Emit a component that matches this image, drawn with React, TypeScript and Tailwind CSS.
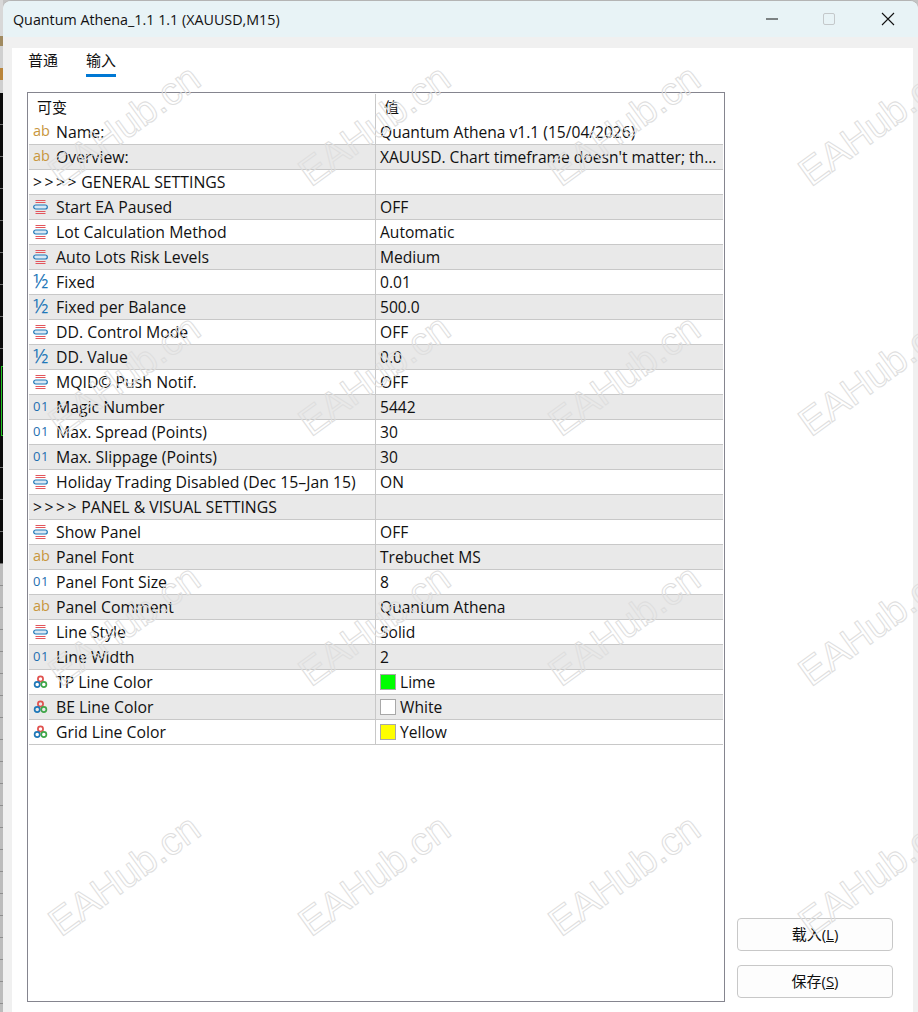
import React from 'react';

const FONT = "font-['Open_Sans','Noto_Sans_CJK_SC',sans-serif]";

type Kind = 'ab' | 'enum' | 'frac' | 'int' | 'color' | 'none';

type Row = { kind: Kind; name: string; value: string; swatch?: string };

const ROWS: Row[] = [
  { kind: 'ab', name: 'Name:', value: 'Quantum Athena v1.1 (15/04/2026)' },
  { kind: 'ab', name: 'Overview:', value: "XAUUSD. Chart timeframe doesn't matter; th..." },
  { kind: 'none', name: 'GENERAL SETTINGS', value: '' },
  { kind: 'enum', name: 'Start EA Paused', value: 'OFF' },
  { kind: 'enum', name: 'Lot Calculation Method', value: 'Automatic' },
  { kind: 'enum', name: 'Auto Lots Risk Levels', value: 'Medium' },
  { kind: 'frac', name: 'Fixed', value: '0.01' },
  { kind: 'frac', name: 'Fixed per Balance', value: '500.0' },
  { kind: 'enum', name: 'DD. Control Mode', value: 'OFF' },
  { kind: 'frac', name: 'DD. Value', value: '0.0' },
  { kind: 'enum', name: 'MQID© Push Notif.', value: 'OFF' },
  { kind: 'int', name: 'Magic Number', value: '5442' },
  { kind: 'int', name: 'Max. Spread (Points)', value: '30' },
  { kind: 'int', name: 'Max. Slippage (Points)', value: '30' },
  { kind: 'enum', name: 'Holiday Trading Disabled (Dec 15–Jan 15)', value: 'ON' },
  { kind: 'none', name: 'PANEL & VISUAL SETTINGS', value: '' },
  { kind: 'enum', name: 'Show Panel', value: 'OFF' },
  { kind: 'ab', name: 'Panel Font', value: 'Trebuchet MS' },
  { kind: 'int', name: 'Panel Font Size', value: '8' },
  { kind: 'ab', name: 'Panel Comment', value: 'Quantum Athena' },
  { kind: 'enum', name: 'Line Style', value: 'Solid' },
  { kind: 'int', name: 'Line Width', value: '2' },
  { kind: 'color', name: 'TP Line Color', value: 'Lime', swatch: 'bg-[#00ff00]' },
  { kind: 'color', name: 'BE Line Color', value: 'White', swatch: 'bg-white' },
  { kind: 'color', name: 'Grid Line Color', value: 'Yellow', swatch: 'bg-[#ffff00]' },
];

const MARKS = [
  [124, 125], [374, 125], [624, 125], [874, 125],
  [124, 375], [374, 375], [624, 375], [874, 375],
  [124, 625], [374, 625], [624, 625], [874, 625],
  [124, 875], [374, 875], [624, 875], [874, 875],
];

function EnumIcon() {
  return (
    <svg width="15" height="16" viewBox="0 0 15 16" fill="none">
      <path d="M2.5 1.5h10M2.5 3.5h10M2.5 12.5h10M2.5 14.5h10" stroke="#e2555c" strokeWidth="1" />
      <rect x="0.7" y="6" width="13.6" height="4" rx="2" fill="#d8e8f5" stroke="#1f78b8" strokeWidth="1.2" />
    </svg>
  );
}

function ColorIcon() {
  return (
    <svg width="15" height="16" viewBox="0 0 15 16" fill="none" strokeWidth="1.7">
      <circle cx="7.5" cy="5" r="2.6" stroke="#e0524f" />
      <circle cx="4.2" cy="10.5" r="2.6" stroke="#1f78b8" />
      <circle cx="10.8" cy="10.5" r="2.6" stroke="#3fa648" />
    </svg>
  );
}

function RowIcon({ kind }: { kind: Kind }) {
  if (kind === 'ab') {
    return <span className="text-[14.5px] leading-none text-[#c8963c] -translate-y-[1px]">ab</span>;
  }
  if (kind === 'int') {
    return <span className="text-[13px] leading-none tracking-[0.5px] text-[#1f6fb0] -translate-y-[1px]">01</span>;
  }
  if (kind === 'frac') {
    return <span className="text-[20px] leading-none text-[#1f78b8] -translate-y-[1px]">½</span>;
  }
  if (kind === 'enum') return <EnumIcon />;
  if (kind === 'color') return <ColorIcon />;
  return null;
}

function ParamRow({ row, index }: { row: Row; index: number }) {
  const section = row.kind === 'none';
  return (
    <div className={`flex h-[25px] border-b border-[#c8c8c8] ${index % 2 ? 'bg-[#e9e9e9]' : 'bg-white'}`}>
      <div className="flex w-[347px] shrink-0 items-center border-r border-[#c8c8c8] pl-[4px]">
        {!section && (
          <span className="flex w-[23px] shrink-0 items-center">
            <RowIcon kind={row.kind} />
          </span>
        )}
        {section && <span className="translate-y-[1px] tracking-[2.5px]">{'>>>>'}</span>}
        <span className={`translate-y-[1px] whitespace-nowrap ${section ? 'pl-[2px]' : ''}`}>{row.name}</span>
      </div>
      <div className="flex min-w-0 flex-1 items-center gap-[4px] pl-[4px] text-[15.6px]">
        {row.swatch && <span className={`h-[16px] w-[16px] shrink-0 border border-[#a8a8a8] ${row.swatch}`} />}
        <span className="translate-y-[1px] whitespace-nowrap">{row.value}</span>
      </div>
    </div>
  );
}

function WindowButtons() {
  return (
    <div className="flex items-center">
      <svg width="14" height="14" viewBox="0 0 14 14" className="mr-[44px]">
        <path d="M1 7h12" stroke="#111" strokeWidth="1" />
      </svg>
      <div className="mr-[46px] h-[12px] w-[12px] rounded-[2px] border border-[#c4c8ca]" />
      <svg width="14" height="14" viewBox="0 0 14 14" className="mr-[23px]">
        <path d="M1 1l12 12M13 1L1 13" stroke="#111" strokeWidth="1.1" />
      </svg>
    </div>
  );
}

export default function App() {
  return (
    <div className={`relative flex h-[1012px] w-[918px] overflow-hidden bg-[#c4c4c4] text-[15.8px] text-[#111] ${FONT}`}>
      {/* Chart window behind the dialog */}
      <div className="flex w-[3px] shrink-0 flex-col">
        <div className="h-[36px] bg-[#d8d8d8]" />
        <div className="h-[10px] bg-[#a08a60]" />
        <div className="h-[22px] bg-[#d0d0d0]" />
        <div className="h-[12px] bg-[#b9843a]" />
        <div className="h-[13px] bg-[#cfcfcf]" />
        <div className="h-[273px] bg-[#0a0a0a] bg-[repeating-linear-gradient(to_bottom,#0a0a0a_0,#0a0a0a_31px,#6e6e6e_31px,#6e6e6e_32px)]" />
        <div className="h-[70px] bg-[#0a0a0a] pl-px">
          <div className="h-full border-y border-l border-[#1fc21f]" />
        </div>
        <div className="h-[128px] bg-[#0a0a0a] bg-[repeating-linear-gradient(to_bottom,#0a0a0a_0,#0a0a0a_31px,#6e6e6e_31px,#6e6e6e_32px)]" />
        <div className="flex-1 bg-[repeating-linear-gradient(to_bottom,#bcbcbc_0,#bcbcbc_21px,#8e8e8e_21px,#8e8e8e_22px)]" />
      </div>

      <div className="flex min-w-0 flex-1 flex-col rounded-t-lg border-t border-[#b4b4b4] bg-[#f0f0f0]">
        <div className="flex h-[36px] shrink-0 items-center justify-between rounded-t-lg bg-[#e8f3f6] pl-[10px]">
          <span className="translate-y-[1px] text-[14.3px]">Quantum Athena_1.1 1.1 (XAUUSD,M15)</span>
          <WindowButtons />
        </div>

        <div className="ml-[9px] mr-[5px] mt-[11px] flex min-h-0 flex-1 flex-col bg-white">
          <div className="flex h-[44px] shrink-0 gap-[28px] pl-[16px] pt-[2px] text-[15px]">
            <div className="h-[27px] leading-[20px]">普通</div>
            <div className="h-[27px] border-b-[3px] border-[#0078d4] leading-[20px]">输入</div>
          </div>

          <div className="flex min-h-0 flex-1 pb-[10px] pl-[15px]">
            <div className="h-[910px] w-[698px] shrink-0 border border-[#85858f] p-px">
              <div className="flex h-[26px] text-[15px]">
                <div className="w-[347px] shrink-0 border-r border-[#c8c8c8] pl-[8px] leading-[26px]">可变</div>
                <div className="pl-[8px] leading-[26px]">值</div>
              </div>
              {ROWS.map((row, i) => (
                <ParamRow key={row.name} row={row} index={i} />
              ))}
            </div>

            <div className="flex flex-1 flex-col items-start justify-end gap-[14px] pb-[4px] pl-[12px]">
              <button className="h-[33px] w-[156px] rounded-[4px] border border-[#c8c8c8] bg-[#fdfdfd] text-[15px]">
                载入(<span className="underline">L</span>)
              </button>
              <button className="h-[33px] w-[156px] rounded-[4px] border border-[#c8c8c8] bg-[#fdfdfd] text-[15px]">
                保存(<span className="underline">S</span>)
              </button>
            </div>
          </div>
        </div>
      </div>

      {/* Watermark layer */}
      {MARKS.map(([x, y]) => (
        <div
          key={`${x}-${y}`}
          style={{ left: x, top: y }}
          className="pointer-events-none absolute -translate-x-1/2 -translate-y-1/2 -rotate-[36deg] whitespace-nowrap font-['Liberation_Sans',sans-serif] text-[39px] leading-none text-transparent [-webkit-text-stroke:1px_#dedede]"
        >
          EAHub.cn
        </div>
      ))}
    </div>
  );
}
